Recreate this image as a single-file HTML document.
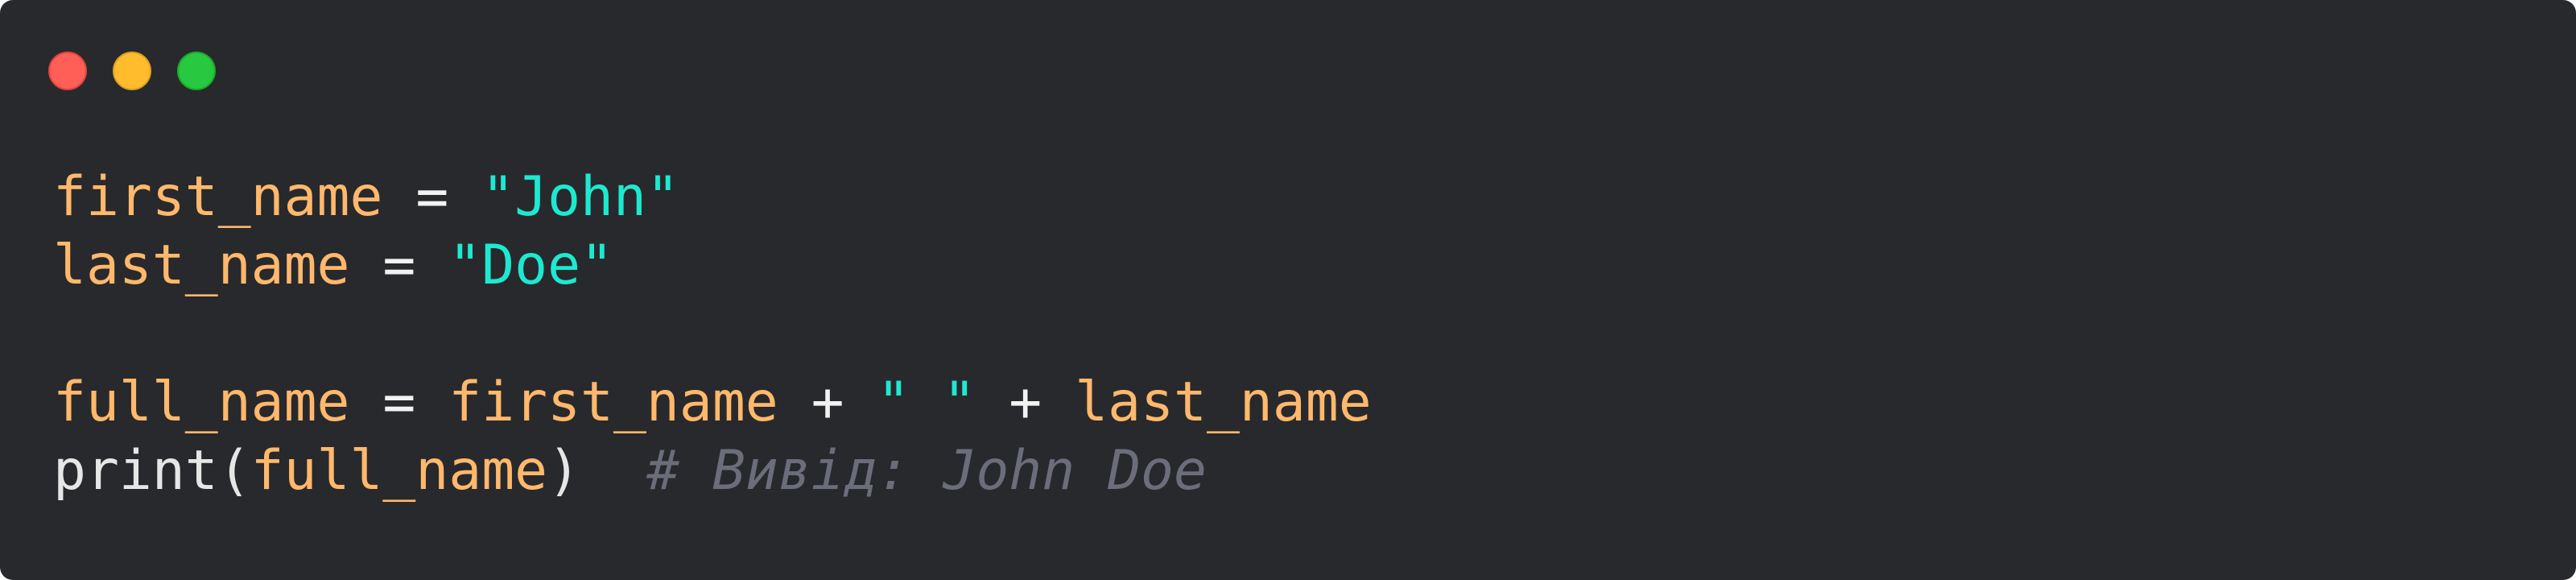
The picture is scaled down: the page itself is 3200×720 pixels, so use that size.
<!DOCTYPE html>
<html><head><meta charset="utf-8"><style>
html,body{margin:0;padding:0;background:#fff;}
.win{position:absolute;left:0;top:0;width:3200px;height:720px;background:#28292c;border-radius:16px;overflow:hidden;}
.dot{position:absolute;top:64px;width:48px;height:48px;border-radius:50%;box-sizing:border-box;}
.code{position:absolute;left:66px;top:202px;font-family:"DejaVu Sans Mono","Liberation Mono",monospace;font-size:68px;line-height:85px;white-space:pre;color:#f2f2f2;}
.v{color:#ffb86c}.s{color:#1de9d0}.c{color:#6b6d7a;font-style:italic}.p{color:#e6e6e6}
</style></head><body>
<div class="win">
<div class="dot" style="left:60px;background:#ff5f57;border:2px solid #e0443e"></div>
<div class="dot" style="left:140px;background:#ffbd2e;border:2px solid #dea123"></div>
<div class="dot" style="left:220px;background:#28c840;border:2px solid #1aab29"></div>
<div class="code"><span class="v">first_name</span> = <span class="s">"John"</span>
<span class="v">last_name</span> = <span class="s">"Doe"</span>

<span class="v">full_name</span> = <span class="v">first_name</span> + <span class="s">" "</span> + <span class="v">last_name</span>
<span class="p">print(</span><span class="v">full_name</span><span class="p">)</span>  <span class="c"># Вивід: John Doe</span></div>
</div>
</body></html>
